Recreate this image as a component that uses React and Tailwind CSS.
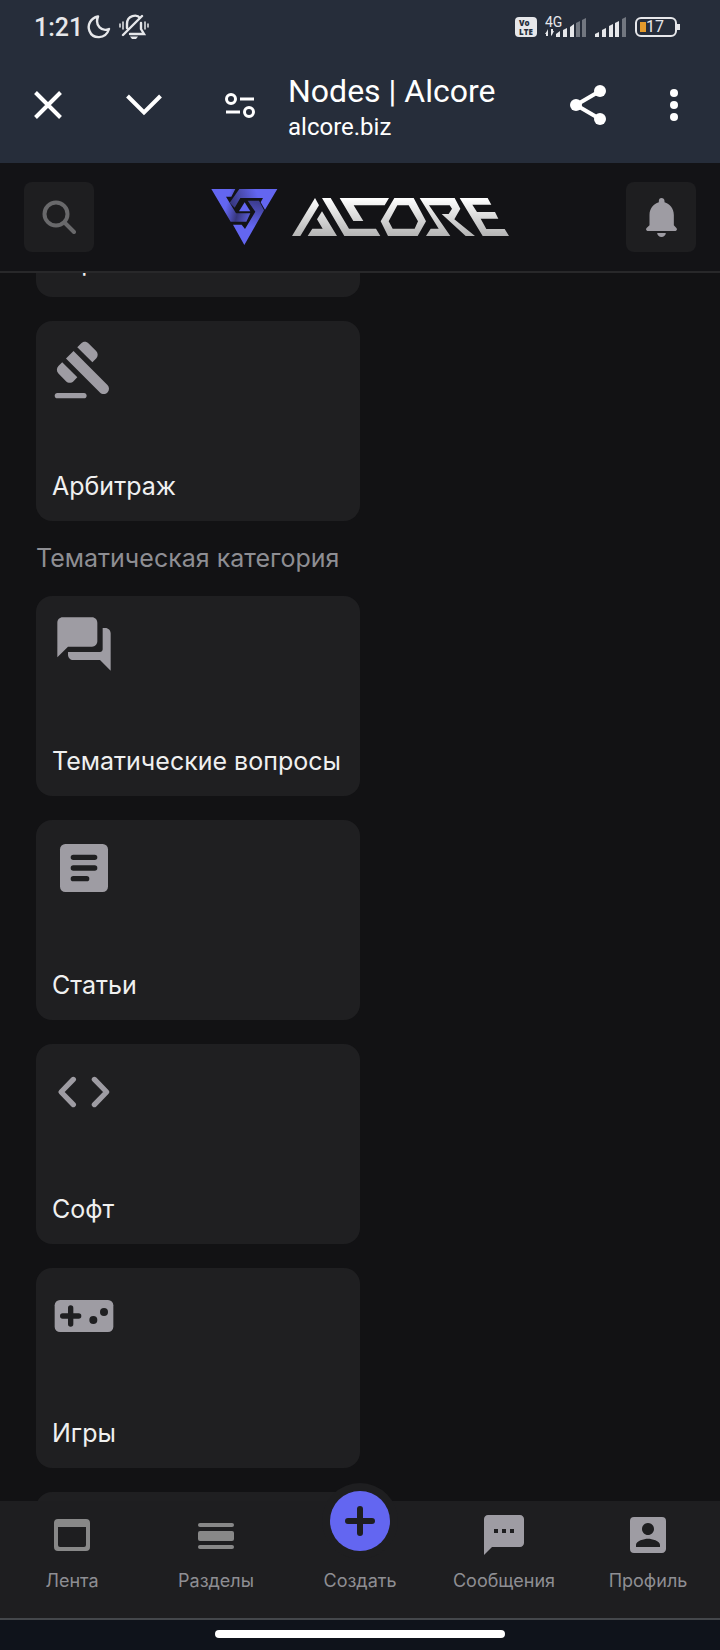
import clsx from "clsx";

const cards = [
  { label: "Торговля", Icon: GavelIcon },
  { label: "Арбитраж", Icon: GavelIcon },
];

const themed = [
  { label: "Тематические вопросы", Icon: ForumIcon },
  { label: "Статьи", Icon: ArticleIcon },
  { label: "Софт", Icon: CodeIcon },
  { label: "Игры", Icon: GamepadIcon },
  { label: "", Icon: ArticleIcon },
];

function GavelIcon() {
  return (
    <svg viewBox="0 0 24 24" className="size-16" fill="currentColor" aria-hidden="true">
      <path d="M2 21h10c.55 0 1 .45 1 1s-.45 1-1 1H2c-.55 0-1-.45-1-1s.45-1 1-1zM5.24 8.07l2.83-2.83 12.73 12.73c.78.78.78 2.05 0 2.83s-2.05.78-2.83 0L5.24 8.07zM13.73 2.41l2.83 2.83c.78.78.78 2.05 0 2.83l-1.42 1.42-5.66-5.66 1.42-1.42c.79-.78 2.05-.78 2.83 0zM3.83 9.48l5.66 5.66-1.42 1.41c-.78.79-2.05.79-2.83 0l-2.83-2.83c-.78-.78-.78-2.04 0-2.83l1.42-1.41z" />
    </svg>
  );
}

function ForumIcon() {
  return (
    <svg viewBox="0 0 24 24" className="size-16" fill="currentColor" aria-hidden="true">
      <path d="M20 6h-1v8c0 .55-.45 1-1 1H6v1c0 1.100.9 2 2 2h10l4 4V8c0-1.100-.9-2-2-2z" />
      <path d="M17 11V4c0-1.100-.9-2-2-2H4c-1.100 0-2 .9-2 2v13l4-4h9c1.100 0 2-.9 2-2z" />
    </svg>
  );
}

function ArticleIcon() {
  return (
    <svg viewBox="0 0 24 24" className="size-16" aria-hidden="true">
      <rect x="3" y="3" width="18" height="18" rx="2" fill="currentColor" />
      <path d="M8 8h8M8 12h8M8 16h5" stroke="#1f1f21" strokeWidth="2" strokeLinecap="round" />
    </svg>
  );
}

function CodeIcon() {
  return (
    <svg viewBox="0 0 24 24" className="size-16" fill="none" stroke="currentColor" strokeWidth="2" strokeLinecap="round" strokeLinejoin="round" aria-hidden="true">
      <path d="M8 7.300 3.400 12 8 16.700M15.900 7.300 20.500 12l-4.600 4.700" />
    </svg>
  );
}

function GamepadIcon() {
  return (
    <svg viewBox="0 0 24 24" className="size-16" aria-hidden="true">
      <rect x="1" y="6" width="22" height="12" rx="2" fill="currentColor" />
      <path d="M4 12h6M7 9v6" stroke="#1f1f21" strokeWidth="2" strokeLinecap="round" />
      <circle cx="15.500" cy="13.500" r="1.500" fill="#1f1f21" />
      <circle cx="19.500" cy="10.500" r="1.500" fill="#1f1f21" />
    </svg>
  );
}

function StatusBar() {
  return (
    <div className="flex h-14 items-center justify-between pr-10 pb-[2px] pl-[34px] text-[#e6e7ea]">
      <div className="flex items-center gap-1">
        <span className="pt-[2px] text-[25px] leading-8 font-medium">1:21</span>
        <svg viewBox="0 0 24 24" className="size-6" fill="none" stroke="currentColor" strokeWidth="2.400" strokeLinejoin="round" aria-hidden="true">
          <path d="M11 1.500C3.500 3 0 10 2.500 16c3 8 16 9 19.500-2C15 17 7.500 11 11 1.500z" />
        </svg>
        <svg viewBox="0 0 30 26" className="ml-1 h-[26px] w-[30px]" fill="none" stroke="currentColor" strokeWidth="2" strokeLinecap="round" aria-hidden="true">
          <path d="M1 10v3M4 8v7M29 10v3M26 8v7" strokeWidth="1.500" />
          <path d="M4 21 23 2M8 14V10c0-9 10-10 13-6M22 9v6l3 5H11" strokeWidth="2.400" />
          <path d="M11 22.500h8l-2 2.500h-4z" fill="currentColor" stroke="none" />
        </svg>
      </div>
      <div className="flex items-center gap-2">
        <span className="flex h-5 w-[22px] flex-col justify-center rounded-sm bg-[#e6e7ea] pl-1 font-['Open_Sans',sans-serif] text-[8px] leading-[9px] font-extrabold text-[#262d3a]">
          <span>Vo</span>
          <span>LTE</span>
        </span>
        <svg viewBox="0 -2 42 28" className="h-7 w-[42px]" fill="currentColor" aria-hidden="true">
          <text x="0" y="12" fontSize="14" fontFamily="Roboto, sans-serif">4G</text>
          <path d="M3 14v7H1v-2H0l2-3zM6 21v-7h2v2h1l-2 4z" />
          <path d="M11 22v-3l4-3v6zM18 22v-7l4-2v9zM25 22v-10l4-3v13z" />
          <path d="M31 22V8l4-2v16zM37 22V5l4-2v19z" opacity=".4" />
        </svg>
        <svg viewBox="0 1 32 24" className="h-6 w-8" fill="currentColor" aria-hidden="true">
          <path d="M0 23v-3l4-2v5zM7 23v-7l4-2v9zM14 23v-11l4-2v13zM20 23V9l4-2v16z" />
          <path d="M27 23V5l4-2v20z" opacity=".4" />
        </svg>
        <div className="flex items-center">
          <div className="flex h-5 w-[42px] items-center rounded-md border-2 border-current pl-[3px]">
            <span className="h-[10px] w-[6px] bg-[#e39a2c]" />
            <span className="text-[16px] leading-4">17</span>
          </div>
          <span className="h-[6px] w-[3px] bg-current" />
        </div>
      </div>
    </div>
  );
}

function BrowserBar() {
  return (
    <div className="flex h-[107px] items-center pb-[9px] text-white">
      <button type="button" aria-label="Закрыть" className="flex w-24 justify-center">
        <svg viewBox="0 0 28 28" className="size-7" stroke="currentColor" strokeWidth="4" aria-hidden="true">
          <path d="M1.500 1.500 26.500 26.500M26.500 1.500 1.500 26.500" />
        </svg>
      </button>
      <button type="button" aria-label="Свернуть" className="flex w-24 justify-center">
        <svg viewBox="0 0 36 22" className="h-[22px] w-9" fill="none" stroke="currentColor" strokeWidth="4" aria-hidden="true">
          <path d="M1.500 2 18 18.500 34.500 2" />
        </svg>
      </button>
      <button type="button" aria-label="Настройки сайта" className="flex w-24 justify-center">
        <svg viewBox="0 0 30 25" className="h-[25px] w-[30px]" fill="none" stroke="currentColor" strokeWidth="3" aria-hidden="true">
          <circle cx="6" cy="6" r="4.500" />
          <circle cx="24" cy="19" r="4.500" />
          <path d="M15 6h14M1 19h14" />
        </svg>
      </button>
      <div className="min-w-0 flex-1 pt-1">
        <div className="truncate text-[32px] leading-10">Nodes | Alcore</div>
        <div className="truncate text-[24px] leading-8">alcore.biz</div>
      </div>
      <button type="button" aria-label="Поделиться" className="flex w-24 justify-center pr-1">
        <svg viewBox="0 0 36 40" className="h-10 w-9" fill="currentColor" stroke="currentColor" aria-hidden="true">
          <path d="M30 6 6 20l24 14" fill="none" strokeWidth="4" />
          <g stroke="none">
            <circle cx="30" cy="6" r="6" />
            <circle cx="6" cy="20" r="6" />
            <circle cx="30" cy="34" r="6" />
          </g>
        </svg>
      </button>
      <button type="button" aria-label="Меню" className="mr-[10px] flex w-[72px] justify-center">
        <svg viewBox="0 0 8 32" className="h-8 w-2" fill="currentColor" aria-hidden="true">
          <circle cx="4" cy="4" r="4" />
          <circle cx="4" cy="16" r="4" />
          <circle cx="4" cy="28" r="4" />
        </svg>
      </button>
    </div>
  );
}

function Logo() {
  return (
    <svg viewBox="33 54 897 171" className="h-[57px] w-[299px]" role="img" aria-label="Alcore">
      <defs>
        <linearGradient id="silver" gradientUnits="userSpaceOnUse" x1="0" y1="84" x2="0" y2="198">
          <stop offset="0" stopColor="#fff" />
          <stop offset="1" stopColor="#b4b4b4" />
        </linearGradient>
        <linearGradient id="leftArm" gradientUnits="userSpaceOnUse" x1="75" y1="120" x2="150" y2="140">
          <stop offset="0" stopColor="#6366f1" />
          <stop offset=".5" stopColor="#36367c" />
          <stop offset="1" stopColor="#5a5cd6" />
        </linearGradient>
        <linearGradient id="topArm" gradientUnits="userSpaceOnUse" x1="175" y1="80" x2="95" y2="110">
          <stop offset="0" stopColor="#6366f1" />
          <stop offset="1" stopColor="#36367c" />
        </linearGradient>
        <linearGradient id="rightArm" gradientUnits="userSpaceOnUse" x1="150" y1="170" x2="165" y2="95">
          <stop offset="0" stopColor="#6366f1" />
          <stop offset="1" stopColor="#3d3d90" />
        </linearGradient>
      </defs>
      {/* emblem */}
      <path d="M34 57h72L94 80H78l30 50h43l-12 25H92z" fill="url(#leftArm)" />
      <path d="M118 57h114l-37 62-13-22 7-13h-68l-17 29-15-15z" fill="url(#topArm)" />
      <path d="M143 92h34l15 29-59 104-34-61h26l10 13 31-52z" fill="url(#rightArm)" />
      <path d="M134 97 151 124h-34z" fill="#6366f1" />
      {/* wordmark */}
      <g fill="url(#silver)">
        <path d="M276 198 345 84l12 22-56 92z" />
        <path d="M366 124l45 74h-88l14-22h31l-17-28z" />
        <path d="M366 84h26l55 92h81l13 22H433z" />
        <path d="M419 84h148l-13 22h-93l29 47h-30z" />
        <path d="M583 84h58l37 70-25 44h-89l-22-44zM592 106l-26 48 12 22h66l10-22-28-48z" fillRule="evenodd" />
        <path d="M659 84h105l17 32-18 32 62 50h-28l-72-66h21l10-16-7-10h-62l64 92h-73l14-22h24z" />
        <path d="M779 84h84l11 20h-57l14 22h54l10 20h-53l17 31h55l13 21h-79z" />
      </g>
    </svg>
  );
}

function SiteHeader() {
  return (
    <header className="flex h-[110px] items-center justify-between border-b-2 border-[#28282a] bg-[#131316] px-6">
      <button type="button" aria-label="Поиск" className="flex size-[70px] items-center justify-center rounded-lg bg-[#1e1e20] text-[#69696b]">
        <svg viewBox="0 0 34 34" className="size-[34px]" fill="none" stroke="currentColor" strokeWidth="4" strokeLinecap="round" aria-hidden="true">
          <circle cx="14" cy="14" r="11.500" />
          <path d="M22.500 22.500 32 32" />
        </svg>
      </button>
      <a href="#home" className="pb-[2px]">
        <Logo />
      </a>
      <button type="button" aria-label="Уведомления" className="flex size-[70px] items-center justify-center rounded-lg bg-[#1e1e20] text-[#9e9ca3]">
        <svg viewBox="109 84 92 117" className="h-[39px] w-[31px]" fill="currentColor" aria-hidden="true">
          <path d="M155 84c5 0 9 4 9 9v4c16 5 28 19 28 38v31l7 7c5 5 1 10-4 10h-80c-5 0-9-5-4-10l8-7v-31c0-19 12-33 28-38v-4c0-5 3-9 8-9z" />
          <path d="M142 189h26c0 7-6 12-13 12s-13-5-13-12z" />
        </svg>
      </button>
    </header>
  );
}

function NodeCard({ label, Icon }) {
  return (
    <a href="#node" className="flex h-[200px] w-[324px] shrink-0 flex-col justify-between rounded-2xl bg-[#1f1f21] px-4 pt-4 pb-[17px] text-[#9e9ca3]">
      <Icon />
      <span className="text-[25px] leading-9 text-[#f0f0f0]">{label}</span>
    </a>
  );
}

function NavItem({ label, dim, children }) {
  return (
    <a href="#nav" className="flex flex-1 flex-col items-center pt-[10px] text-[#8e8e93]">
      <svg viewBox="0 0 24 24" className={clsx("size-12", dim ? "text-[#888888]" : "text-[#9e9ca3]")} fill="currentColor" aria-hidden="true">
        {children}
      </svg>
      <span className="mt-2 text-[18px] leading-7">{label}</span>
    </a>
  );
}

function BottomNav() {
  return (
    <nav className="relative flex h-[119px] border-b-2 border-[#44474b] bg-[#1e1e20]">
      <NavItem label="Лента" dim>
        <path fillRule="evenodd" d="M5 4h14a2 2 0 0 1 2 2v12a2 2 0 0 1-2 2H5a2 2 0 0 1-2-2V6a2 2 0 0 1 2-2zm0 4v9a1 1 0 0 0 1 1h12a1 1 0 0 0 1-1V8z" />
      </NavItem>
      <NavItem label="Разделы" dim>
        <rect x="3" y="6" width="18" height="2" rx="1" />
        <rect x="3" y="10" width="18" height="5" rx="1" />
        <rect x="3" y="17" width="18" height="2" rx="1" />
      </NavItem>
      <div className="flex flex-1 flex-col items-center pt-[10px] text-[#8e8e93]">
        <button type="button" aria-labelledby="create" className="absolute -top-[18px] flex size-[76px] items-center justify-center rounded-full bg-[#1e1e20]">
          <span className="flex size-[60px] items-center justify-center rounded-full bg-[#6366f1]">
            <svg viewBox="0 0 30 30" className="size-[30px]" stroke="#1e1e20" strokeWidth="6" strokeLinecap="round" aria-hidden="true">
              <path d="M15 3v24M3 15h24" />
            </svg>
          </span>
        </button>
        <span id="create" className="mt-14 text-[18px] leading-7">Создать</span>
      </div>
      <NavItem label="Сообщения">
        <path d="M20 2H4c-1.100 0-2 .9-2 2v18l4-4h14c1.100 0 2-.9 2-2V4c0-1.100-.9-2-2-2zM9 11H7V9h2v2zm4 0h-2V9h2v2zm4 0h-2V9h2v2z" />
      </NavItem>
      <NavItem label="Профиль">
        <path d="M3 5v14a2 2 0 0 0 2 2h14c1.100 0 2-.9 2-2V5a2 2 0 0 0-2-2H5a2 2 0 0 0-2 2zm12 4c0 1.660-1.340 3-3 3s-3-1.340-3-3 1.340-3 3-3 3 1.340 3 3zm-9 8c0-2 4-3.100 6-3.100s6 1.100 6 3.100v1H6v-1z" />
      </NavItem>
    </nav>
  );
}

export default function App() {
  return (
    <div className="flex h-screen flex-col overflow-hidden bg-[#121214] font-['Inter',sans-serif]">
      <div className="bg-[#262d3a] font-['Roboto',sans-serif]">
        <StatusBar />
        <BrowserBar />
      </div>
      <SiteHeader />
      <main className="min-h-0 flex-1 overflow-hidden px-9">
        {/* list is scrolled down by most of the first card */}
        <div className="-mt-44 flex flex-col gap-6">
          {cards.map((card) => (
            <NodeCard key={card.label} {...card} />
          ))}
        </div>
        <h2 className="py-5 text-[25px] leading-[35px] text-[#8e8e93]">Тематическая категория</h2>
        <div className="flex flex-col gap-6">
          {themed.map((card) => (
            <NodeCard key={card.label} {...card} />
          ))}
        </div>
      </main>
      <BottomNav />
      <div className="flex h-[30px] justify-center bg-[#0f131b] pt-[10px]">
        <span className="h-2 w-[290px] rounded-full bg-white" />
      </div>
    </div>
  );
}
